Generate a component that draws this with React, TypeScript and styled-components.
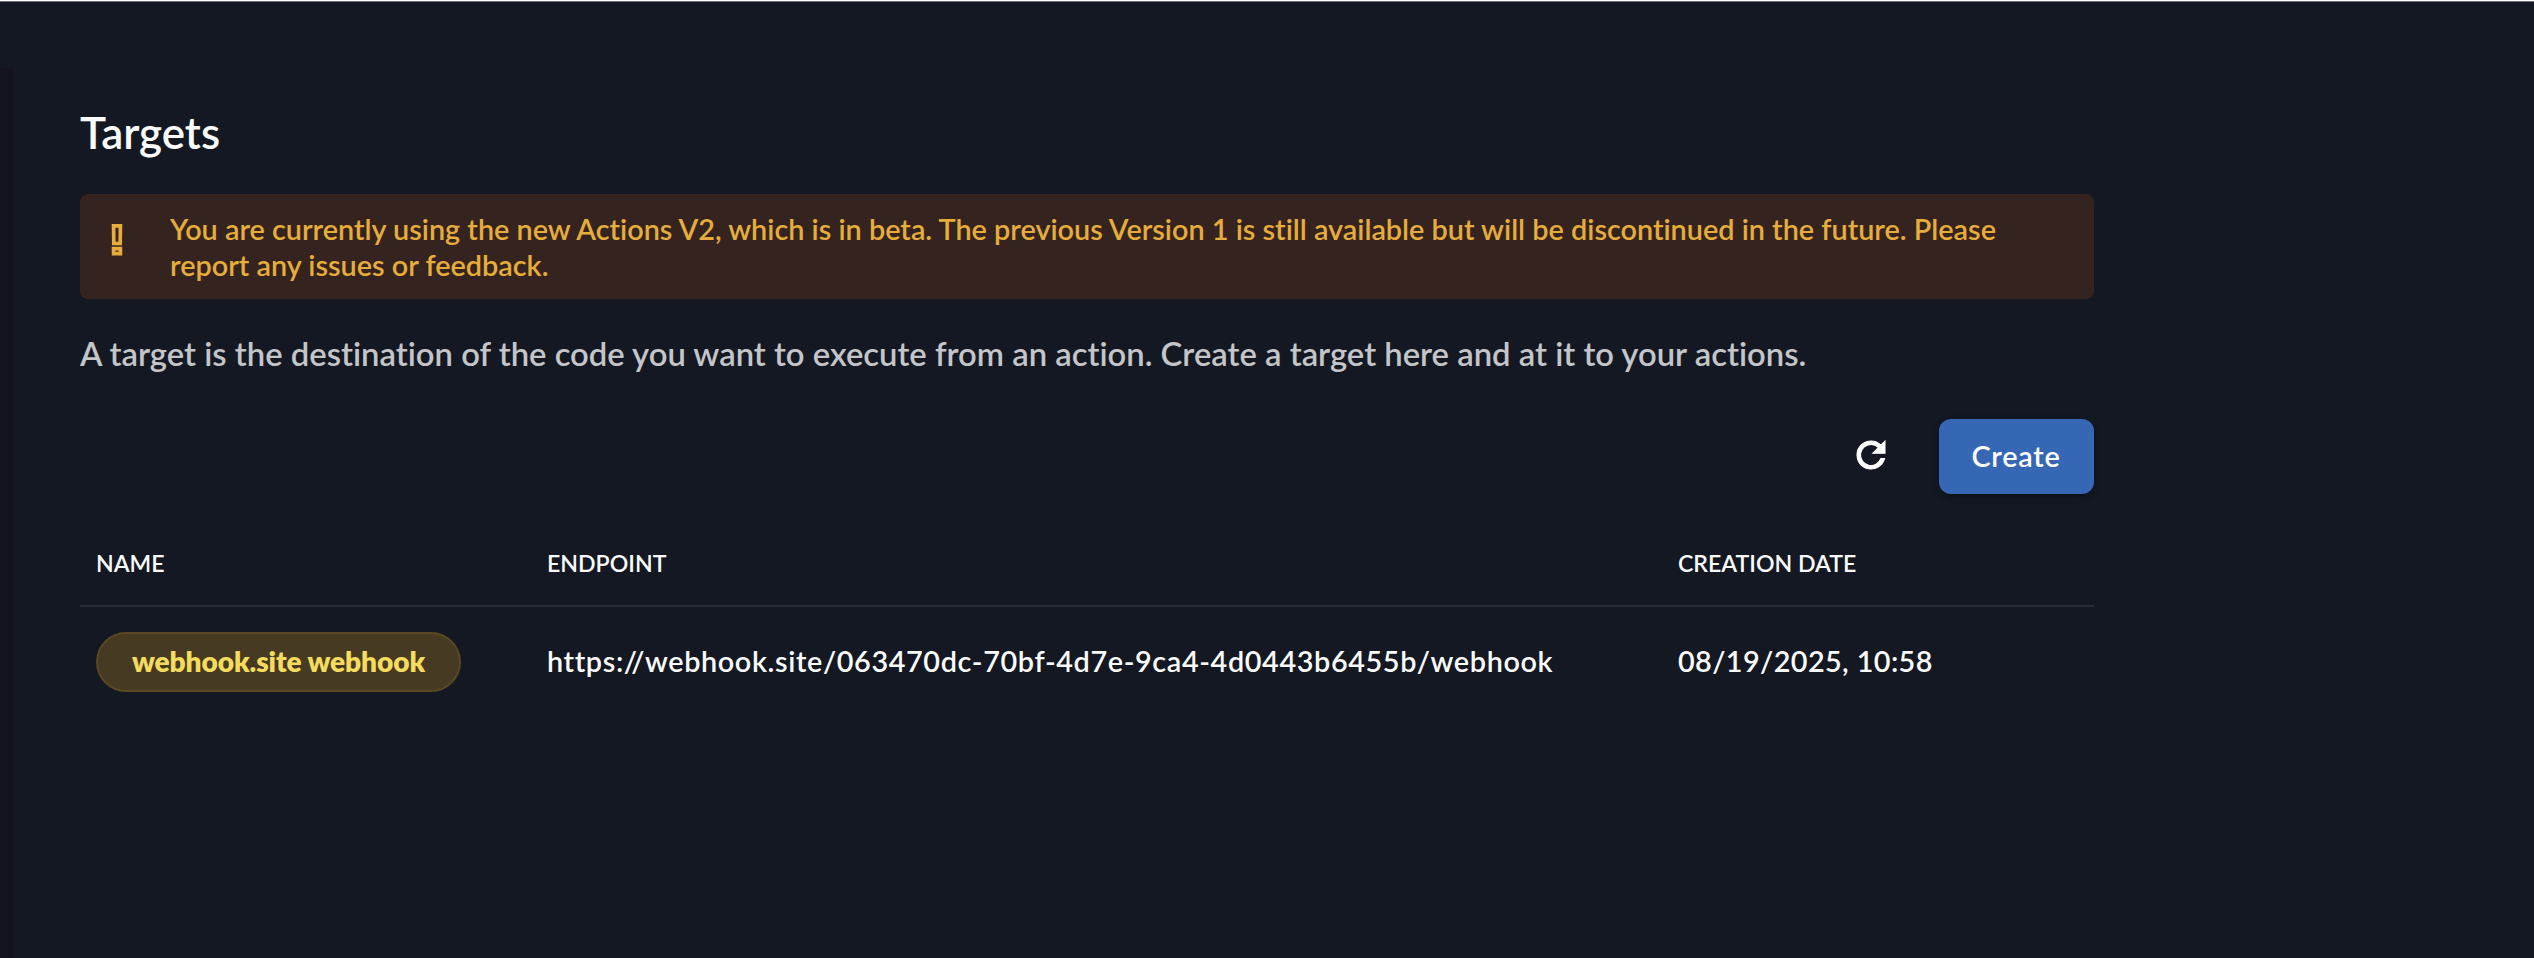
import React from "react";
import styled, { createGlobalStyle } from "styled-components";

const GlobalStyle = createGlobalStyle`
  *, *::before, *::after { box-sizing: border-box; }
  body {
    margin: 0;
    background: #131822;
    color: #fbfbfc;
    font-family: Lato, "Liberation Sans", sans-serif;
    font-weight: 600;
    font-variant-ligatures: none;
  }
`;

const Shell = styled.div`
  height: 958px;
  display: grid;
  grid-template-columns: 13px 1fr;
  grid-template-rows: 67px 1fr;
  background: #131822;
  border-top: 1px solid #fff;
`;

const TopBar = styled.header`
  grid-column: 1 / -1;
  border-top: 1px solid #6f727a;
`;

const SideNav = styled.aside`
  background: #12131e;
`;

const Main = styled.main`
  width: 2081px;
  padding: 37px 0 0 67px;
`;

const Title = styled.h2`
  margin: 0;
  font-size: 43.9px;
  font-weight: 600;
  line-height: 54px;
`;

const Warning = styled.section`
  display: flex;
  align-items: flex-start;
  height: 105px;
  margin-top: 35px;
  padding: 17px 32px 0 28px;
  border-radius: 8px;
  background: #352320;
  color: #e6ad3b;
`;

const WarningIcon = styled.svg`
  flex: none;
  width: 20px;
  height: 34px;
  margin: 12px 42px 0 0;
`;

const WarningText = styled.p`
  margin: 0;
  font-size: 28.82px;
  line-height: 36px;
`;

const Description = styled.p`
  margin: 31px 0 0;
  font-size: 32.8px;
  line-height: 48px;
  color: #c4c5c8;
`;

const Actions = styled.div`
  display: flex;
  align-items: center;
  justify-content: flex-end;
  gap: 47px;
  margin-top: 41px;
`;

const RefreshButton = styled.button`
  display: flex;
  padding: 0;
  border: 0;
  background: none;
  color: #fff;

  svg {
    width: 42px;
    height: 42px;
    margin-top: -3px;
    fill: currentColor;
    stroke: currentColor;
    stroke-width: 0.6;
  }
`;

const CreateButton = styled.button`
  width: 155px;
  height: 75px;
  padding: 0 1px 2px 0;
  border: 0;
  border-radius: 12px;
  background: #3567b5;
  color: #fff;
  font: 600 28.8px/36px Lato, "Liberation Sans", sans-serif;
  letter-spacing: 0.75px;
  box-shadow: 0 4px 4px -2px rgba(0, 0, 0, 0.2), 0 2px 4px rgba(0, 0, 0, 0.14),
    0 2px 8px rgba(0, 0, 0, 0.1);
`;

const Table = styled.div`
  margin-top: 28px;
`;

const Row = styled.div<{ $head?: boolean }>`
  display: grid;
  grid-template-columns: 451px 1131px 1fr;
  align-items: center;
  height: ${(p) => (p.$head ? "85px" : "110px")};
  padding-left: 16px;
  ${(p) => p.$head && "border-bottom: 2px solid #292b37;"}
`;

const HeadCell = styled.div`
  padding-bottom: 2px;
  font-size: 23.1px;
  line-height: 30px;
`;

const Cell = styled.div<{ $spacing?: string }>`
  padding-bottom: 2px;
  font-size: 28.8px;
  line-height: 36px;
  letter-spacing: ${(p) => p.$spacing ?? "0"};
`;

const Chip = styled.span`
  display: flex;
  align-items: center;
  justify-content: center;
  width: 365px;
  height: 60px;
  padding-bottom: 2px;
  border: 2px solid #594822;
  border-radius: 30px;
  background: #463a22;
  color: #f5dc5e;
  font-size: 28.1px;
  font-weight: 800;
  letter-spacing: -0.1px;
`;

export default function App() {
  return (
    <>
      <GlobalStyle />
      <Shell>
        <TopBar />
        <SideNav />
        <Main>
          <Title>Targets</Title>
          <Warning>
            <WarningIcon viewBox="0 0 20 34" fill="none" stroke="currentColor" strokeWidth="3.7">
              <path d="M5.6 2.9h6.8l-.2 17.6h-6.4zM5.6 25.7h6.8v5h-6.8z" />
            </WarningIcon>
            <WarningText>
              You are currently using the new Actions V2, which is in beta. The previous Version 1 is
              still available but will be discontinued in the future. Please report any issues or
              feedback.
            </WarningText>
          </Warning>
          <Description>
            A target is the destination of the code you want to execute from an action. Create a
            target here and at it to your actions.
          </Description>
          <Actions>
            <RefreshButton aria-label="Refresh">
              <svg viewBox="0 0 24 24">
                <path d="M17.65 6.35A7.96 7.96 0 0 0 12 4a8 8 0 1 0 7.73 10h-2.08A6 6 0 1 1 12 6c1.66 0 3.14.69 4.22 1.78L13 11h7V4z" />
              </svg>
            </RefreshButton>
            <CreateButton>Create</CreateButton>
          </Actions>
          <Table>
            <Row $head>
              <HeadCell>NAME</HeadCell>
              <HeadCell>ENDPOINT</HeadCell>
              <HeadCell>CREATION DATE</HeadCell>
            </Row>
            <Row>
              <Chip>webhook.site webhook</Chip>
              <Cell $spacing="0.62px">
                https://webhook.site/063470dc-70bf-4d7e-9ca4-4d0443b6455b/webhook
              </Cell>
              <Cell $spacing="0.4px">08/19/2025, 10:58</Cell>
            </Row>
          </Table>
        </Main>
      </Shell>
    </>
  );
}
